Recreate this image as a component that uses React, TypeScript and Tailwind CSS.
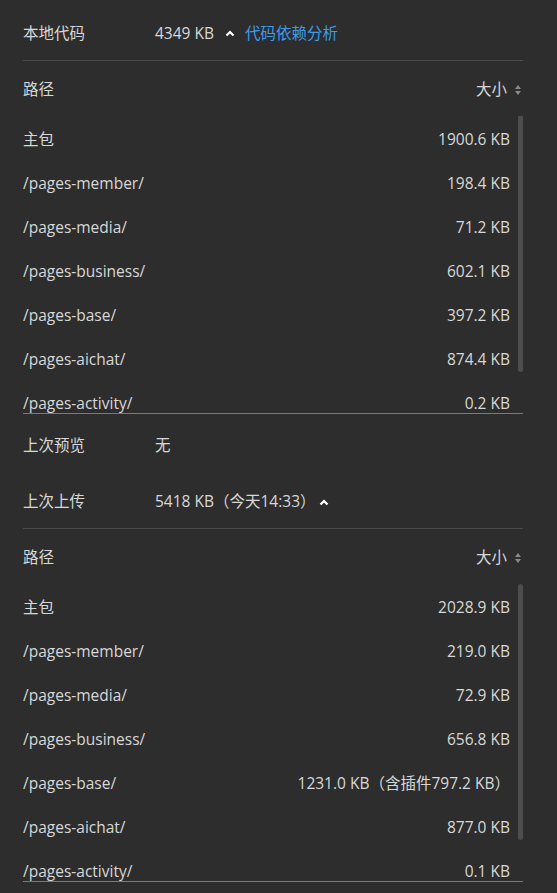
import React from 'react';

type Row = { path: string; size: string };

const local: Row[] = [
  { path: '主包', size: '1900.6 KB' },
  { path: '/pages-member/', size: '198.4 KB' },
  { path: '/pages-media/', size: '71.2 KB' },
  { path: '/pages-business/', size: '602.1 KB' },
  { path: '/pages-base/', size: '397.2 KB' },
  { path: '/pages-aichat/', size: '874.4 KB' },
  { path: '/pages-activity/', size: '0.2 KB' },
];

const uploaded: Row[] = [
  { path: '主包', size: '2028.9 KB' },
  { path: '/pages-member/', size: '219.0 KB' },
  { path: '/pages-media/', size: '72.9 KB' },
  { path: '/pages-business/', size: '656.8 KB' },
  { path: '/pages-base/', size: '1231.0 KB（含插件797.2 KB）' },
  { path: '/pages-aichat/', size: '877.0 KB' },
  { path: '/pages-activity/', size: '0.1 KB' },
];

const ChevronUp: React.FC<{ className: string }> = ({ className }) => (
  <svg width="10" height="7" viewBox="0 0 10 7" className={className}>
    <path d="M1.5 5.5 L5 2 L8.5 5.5" fill="none" stroke="#ffffff" strokeWidth="2.2" />
  </svg>
);

const SortIcon = () => (
  <svg width="8" height="12" viewBox="0 0 8 12" className="ml-[7px]">
    <path d="M4 1 L7 5 L1 5 Z" fill="#8a8a8a" />
    <path d="M4 11 L7 7 L1 7 Z" fill="#8a8a8a" />
  </svg>
);

const SizeTable: React.FC<{ rows: Row[]; thumbTop: number; thumbHeight: number }> = ({ rows, thumbTop, thumbHeight }) => (
  <div>
    <div className="h-[55px] pt-[3px] flex items-center justify-between pr-[1px]">
      <span>路径</span>
      <span className="flex items-center">
        大小
        <SortIcon />
      </span>
    </div>
    <div className="relative h-[298px] overflow-hidden border-b border-[#7a7a7a]">
      {rows.map((r) => (
        <div key={r.path} className="h-[44px] pt-[4px] flex items-center justify-between pr-[13px]">
          <span>{r.path}</span>
          <span>{r.size}</span>
        </div>
      ))}
      <div
        className="absolute right-0 w-[5px] rounded-full bg-[#4d4d4d]"
        style={{ top: thumbTop, height: thumbHeight }}
      />
    </div>
  </div>
);

export default function App() {
  return (
    <div
      className="w-[557px] h-[893px] bg-[#2d2d2d] text-[#d8d8d8] text-[15.5px] overflow-hidden"
      style={{ fontFamily: '"Open Sans", "Noto Sans CJK SC", sans-serif' }}
    >
      <div className="ml-[23px] w-[500px]">
        <div className="h-[61px] pt-[7px] flex items-center border-b border-[#4a4a4a]">
          <span className="w-[132px]">本地代码</span>
          <span>4349 KB</span>
          <ChevronUp className="ml-[11px] mr-[10px]" />
          <span className="text-[#3d9be9]">代码依赖分析</span>
        </div>
        <SizeTable rows={local} thumbTop={-1} thumbHeight={257} />
        <div className="h-[60px] pt-[4px] flex items-center">
          <span className="w-[132px]">上次预览</span>
          <span>无</span>
        </div>
        <div className="h-[55px] pt-[2px] flex items-center border-b border-[#4a4a4a]">
          <span className="w-[132px]">上次上传</span>
          <span>5418 KB（今天14:33）</span>
          <ChevronUp className="ml-[3px]" />
        </div>
        <SizeTable rows={uploaded} thumbTop={0} thumbHeight={256} />
      </div>
    </div>
  );
}
